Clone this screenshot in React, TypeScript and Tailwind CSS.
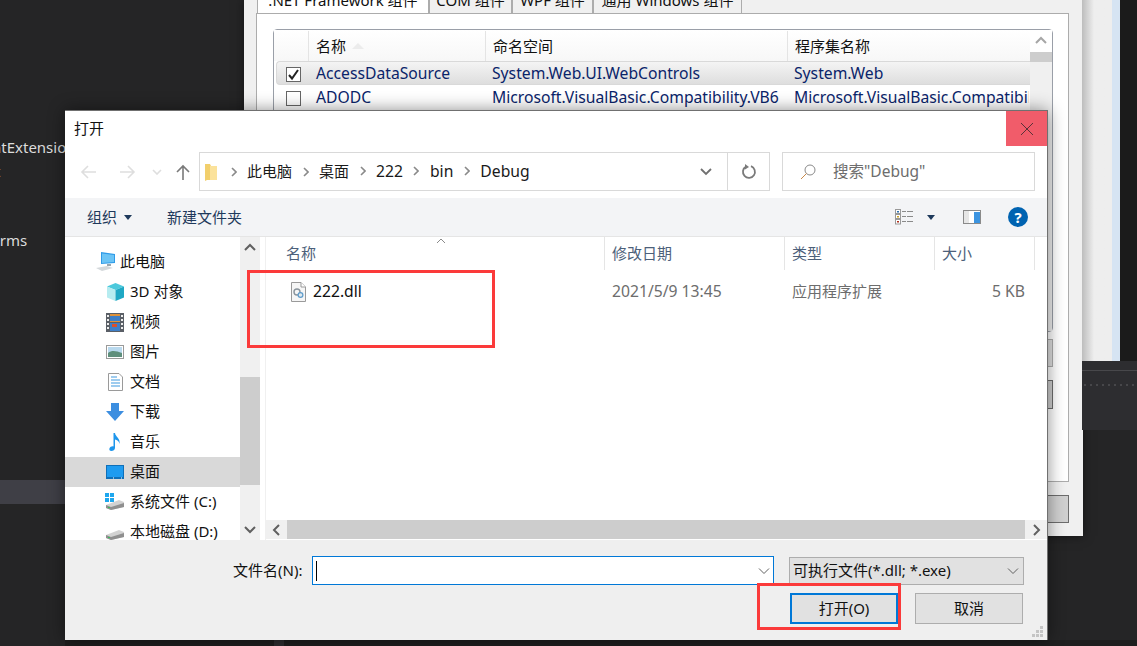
import type { ReactNode } from "react";

const cjk = "[font-family:'Noto_Sans','Noto_Sans_CJK_SC',sans-serif]";

function Chevron({ dir, className = "" }: { dir: "up" | "down" | "left" | "right"; className?: string }) {
  const paths = {
    up: "M1 8 L6 3 L11 8",
    down: "M1 4 L6 9 L11 4",
    left: "M8 1 L3 6 L8 11",
    right: "M4 1 L9 6 L4 11",
  };
  return (
    <svg width="12" height="12" viewBox="0 0 12 12" className={className}>
      <path d={paths[dir]} fill="none" stroke="currentColor" strokeWidth="2" />
    </svg>
  );
}

function ThinChevron() {
  return (
    <svg width="12" height="8" viewBox="0 0 12 8">
      <path d="M1 1.5 L6 6.5 L11 1.5" fill="none" stroke="#606060" strokeWidth="1" />
    </svg>
  );
}

function MonitorIcon() {
  return (
    <svg width="22" height="22" viewBox="0 0 22 22">
      <path d="M6 1 L20 3 L20 12 L6 13 Z" fill="#2f9be8" />
      <path d="M7 2.5 L19 4 L19 11 L7 12 Z" fill="#6cc4f5" />
      <path d="M12 13 L16 13 L16 15 L12 15 Z" fill="#9aa7b0" />
      <path d="M1 17 L12 15 L18 17 L7 20 Z" fill="#d4d8db" />
    </svg>
  );
}

function CubeIcon() {
  return (
    <svg width="19" height="20" viewBox="0 0 19 20">
      <path d="M9.5 1 L18 4.5 L9.5 8 L1 4.5 Z" fill="#4cc9dc" />
      <path d="M1 4.5 L9.5 8 L9.5 19 L1 15.5 Z" fill="#b6ecf0" />
      <path d="M18 4.5 L9.5 8 L9.5 19 L18 15.5 Z" fill="#1fa8c4" />
    </svg>
  );
}

function FilmIcon() {
  return (
    <svg width="18" height="19" viewBox="0 0 18 19">
      <rect x="0" y="0" width="18" height="19" fill="#5a5f66" />
      <rect x="4" y="1" width="10" height="8" fill="#e0923a" />
      <rect x="4" y="3" width="10" height="5" fill="#3e7fc7" />
      <rect x="4" y="10" width="10" height="8" fill="#3e7fc7" />
      <rect x="6" y="11" width="5" height="3" fill="#d9502e" />
      <rect x="1" y="2" width="2" height="2" fill="#eee" />
      <rect x="1" y="6" width="2" height="2" fill="#eee" />
      <rect x="1" y="10" width="2" height="2" fill="#eee" />
      <rect x="1" y="14" width="2" height="2" fill="#eee" />
      <rect x="15" y="2" width="2" height="2" fill="#eee" />
      <rect x="15" y="6" width="2" height="2" fill="#eee" />
      <rect x="15" y="10" width="2" height="2" fill="#eee" />
      <rect x="15" y="14" width="2" height="2" fill="#eee" />
    </svg>
  );
}

function PictureIcon() {
  return (
    <svg width="18" height="14" viewBox="0 0 18 14">
      <rect x="0.5" y="0.5" width="17" height="13" fill="#fff" stroke="#9a9a9a" />
      <rect x="2" y="2" width="14" height="10" fill="#b9d9ee" />
      <path d="M2 8 C6 5 10 6 16 8 L16 12 L2 12 Z" fill="#5f8f7c" />
    </svg>
  );
}

function DocIcon() {
  return (
    <svg width="15" height="18" viewBox="0 0 15 18">
      <path d="M0.5 0.5 L11 0.5 L14.5 4 L14.5 17.5 L0.5 17.5 Z" fill="#fff" stroke="#9a9a9a" />
      <path d="M3 4 H9 M3 7 H12 M3 10 H12 M3 13 H12" stroke="#3f9ae0" strokeWidth="1.2" />
    </svg>
  );
}

function DownloadIcon() {
  return (
    <svg width="18" height="18" viewBox="0 0 18 18">
      <path d="M5 0 H13 V8 H18 L9 18 L0 8 H5 Z" fill="#3c8ee0" />
    </svg>
  );
}

function MusicIcon() {
  return (
    <svg width="12" height="18" viewBox="0 0 12 18">
      <path d="M4.5 0 H6 C6.5 4 11.5 5 10.5 11 C10 8 8 7 6 6.5 V15 C6 17 4 18 2.5 18 C0.5 18 0 16.5 0.5 15.2 C1 14 3 13 4.5 13.5 Z" fill="#1e96ec" />
    </svg>
  );
}

function DesktopIcon() {
  return (
    <svg width="18" height="14" viewBox="0 0 18 14">
      <rect x="0" y="0" width="18" height="14" fill="#0f6fb8" />
      <rect x="1" y="1" width="16" height="11" fill="#1e9bf0" />
      <rect x="7" y="12.5" width="1" height="1" fill="#fff" />
      <rect x="15" y="12.5" width="1" height="1" fill="#fff" />
    </svg>
  );
}

function DriveIcon({ windows = false }: { windows?: boolean }) {
  return (
    <svg width="20" height="18" viewBox="0 0 20 18">
      {windows && (
        <g fill="#1ea7ee">
          <rect x="0" y="0" width="4" height="4" />
          <rect x="5" y="0" width="4" height="4" />
          <rect x="0" y="5" width="4" height="4" />
          <rect x="5" y="5" width="4" height="4" />
        </g>
      )}
      <path d="M1 12 L14 7 L19 9 L19 14 L6 17 L1 15 Z" fill="#d2d2d2" />
      <path d="M1 12 L6 14 L19 10 L19 14 L6 17 L1 15 Z" fill="#8f8f8f" />
      <rect x="3" y="14" width="2" height="1" fill="#37c25a" />
    </svg>
  );
}

function DllIcon() {
  return (
    <svg width="15" height="20" viewBox="0 0 15 20">
      <path d="M0.5 0.5 L10 0.5 L14.5 5 L14.5 19.5 L0.5 19.5 Z" fill="#f6f6f6" stroke="#9a9a9a" />
      <path d="M10 0.5 V5 H14.5" fill="#fff" stroke="#9a9a9a" />
      <circle cx="6" cy="10" r="3" fill="none" stroke="#8a949c" strokeWidth="1.4" />
      <circle cx="9.5" cy="13" r="2.4" fill="#dfe8ee" stroke="#5e9ccb" strokeWidth="1.2" />
    </svg>
  );
}

function FolderIcon() {
  return (
    <svg width="12" height="18" viewBox="0 0 12 18">
      <path d="M0 1 H5 L6 3 H12 V17 H2 L0 18 Z" fill="#f2cf6c" />
      <path d="M5 3 H12 V17 H5 Z" fill="#fbe29b" />
    </svg>
  );
}

function NavArrow({ dir, color }: { dir: "left" | "right" | "up"; color: string }) {
  const d = {
    left: "M16 8 H2 M8 2 L2 8 L8 14",
    right: "M0 8 H14 M8 2 L14 8 L8 14",
    up: "M8 16 V2 M2 8 L8 2 L14 8",
  };
  return (
    <svg width="16" height="16" viewBox="0 0 16 16">
      <path d={d[dir]} fill="none" stroke={color} strokeWidth="1.6" />
    </svg>
  );
}

function EditorEdge() {
  return (
    <div className="absolute left-0 top-0 flex w-[65px] flex-col overflow-hidden pt-[135px] text-[15px] text-[#dcdcdc]">
      <div className="-ml-[8px] h-6 whitespace-nowrap leading-6">ntExtension</div>
      <div className="-ml-[5px] h-6 whitespace-nowrap leading-6">t</div>
      <div className="mt-[45px] -ml-[17px] h-6 whitespace-nowrap leading-6">Forms</div>
      <div className="mt-[228px] h-6 bg-[#3f3f46]" />
    </div>
  );
}

function BackDialog() {
  const tabClass = "flex h-[27px] items-center justify-center border border-b-0 border-[#acacac] bg-[#f0f0f0] pb-[2px] text-[15px] text-[#111]";
  return (
    <div className="absolute left-[244px] top-0 flex h-[536px] w-[839px] flex-col items-end bg-[#f0f0f0] pr-[14px] shadow-[0_0_10px_rgba(0,0,0,0.5)]">
      <div className="-mt-[13px] flex h-[27px] w-[812px] shrink-0">
        <div className={`${tabClass} w-[172px] !bg-white`}>.NET Framework 组件</div>
        <div className={`${tabClass} w-[83px]`}>COM 组件</div>
        <div className={`${tabClass} w-[81px]`}>WPF 组件</div>
        <div className={`${tabClass} w-[149px]`}>通用 Windows 组件</div>
      </div>
      <div className="-mt-px flex h-[469px] w-[813px] shrink-0 flex-col items-end border border-[#acacac] bg-white pr-[15px] pt-[15px]">
        <div className="flex h-[303px] w-[780px] shrink-0 rounded-sm border border-[#9a9fa8] bg-white">
          <div className="flex w-[756px] flex-col text-[15.7px]">
            <div className="flex h-[31px] bg-gradient-to-b from-white to-[#f7f7f7] pt-px text-[15px] text-[#111]">
              <div className="w-[35px] border-r border-[#e4e4e4]" />
              <div className="relative flex w-[177px] items-center border-r border-[#e4e4e4] pl-[7px]">
                名称
                <svg width="12" height="6" viewBox="0 0 12 6" className="ml-[6px]">
                  <path d="M0 6 L6 0 L12 6 Z" fill="#ececec" />
                </svg>
              </div>
              <div className="flex w-[302px] items-center border-r border-[#e4e4e4] pl-[7px]">命名空间</div>
              <div className="flex flex-1 items-center pl-[7px]">程序集名称</div>
            </div>
            <div className="ml-[2px] flex h-[24px] items-center rounded-l-sm border border-r-0 border-[#d9d9d9] bg-gradient-to-b from-[#f4f4f4] to-[#dedede] pt-[2px] text-[#0a246a]">
              <div className="flex w-[33px] justify-center">
                <div className="flex h-[15px] w-[15px] items-center justify-center border border-[#666] bg-white">
                  <svg width="13" height="13" viewBox="0 0 13 13">
                    <path d="M2 7 L5 10.5 L11 2" fill="none" stroke="#222" strokeWidth="2" />
                  </svg>
                </div>
              </div>
              <div className="w-[176px] pl-[6px]">AccessDataSource</div>
              <div className="w-[302px] pl-[6px]">System.Web.UI.WebControls</div>
              <div className="flex-1 pl-[6px]">System.Web</div>
            </div>
            <div className="ml-[2px] flex h-[24px] items-center px-px pt-[2px] text-[#0a246a]">
              <div className="flex w-[33px] justify-center">
                <div className="h-[15px] w-[15px] border border-[#666] bg-white" />
              </div>
              <div className="w-[176px] pl-[6px]">ADODC</div>
              <div className="w-[302px] whitespace-nowrap pl-[6px]">Microsoft.VisualBasic.Compatibility.VB6</div>
              <div className="w-[241px] overflow-hidden whitespace-nowrap pl-[6px]">Microsoft.VisualBasic.Compatibility</div>
            </div>
          </div>
          <div className="flex flex-1 flex-col bg-[#f0f0f0]">
            <div className="flex h-[22px] items-center justify-center bg-white text-[#a6a6a6]">
              <Chevron dir="up" />
            </div>
            <div className="h-[10px] bg-[#cdcdcd]" />
          </div>
        </div>
        <div className="mt-[7px] h-[28px] w-[80px] shrink-0 border border-[#adadad] bg-[#e1e1e1]" />
        <div className="mt-[13px] h-[29px] w-[80px] shrink-0 border border-[#6d6d6d] bg-[#d0d0d0]" />
      </div>
      <div className="mt-[13px] h-[28px] w-[120px] shrink-0 border border-[#6d6d6d] bg-[#d0d0d0]" />
    </div>
  );
}

function RightEdge() {
  return (
    <div className="absolute left-[1082px] top-0 flex h-[430px] w-[55px] flex-col">
      <div className="flex h-[361px] shrink-0">
        <div className="w-[30px] bg-gradient-to-r from-[#bdbdbd] via-[#eeeeee] via-40% to-[#eeeeee]" />
        <div className="w-[8px] bg-[#d6e4f3]" />
        <div className="flex-1 bg-[#1b1b1b]" />
      </div>
      <div className="flex flex-1 flex-col bg-[#2d2d30]">
        <div className="mt-[9px] h-px bg-[#48484b]" />
        <div className="mt-[11px] h-[6px] bg-[radial-gradient(#47474a_1px,transparent_1.5px)] bg-[length:6px_6px]" />
      </div>
    </div>
  );
}

function AddressBar() {
  const crumbs = [
    { label: "此电脑", size: "text-[15px]" },
    { label: "桌面", size: "text-[15px]" },
    { label: "222", size: "text-[15.7px]" },
    { label: "bin", size: "text-[15.7px]" },
    { label: "Debug", size: "text-[15.7px]" },
  ];
  return (
    <div className="flex h-[52px] shrink-0 items-start pt-[6px]">
      <div className="flex h-[39px] w-[134px] items-center">
        <div className="ml-[15px]"><NavArrow dir="left" color="#dedede" /></div>
        <div className="ml-[24px]"><NavArrow dir="right" color="#dedede" /></div>
        <div className="ml-[15px] flex w-[12px] justify-center text-[#dedede]">
          <svg width="10" height="6" viewBox="0 0 10 6"><path d="M1 1 L5 5 L9 1" fill="none" stroke="currentColor" strokeWidth="1.6" /></svg>
        </div>
        <div className="ml-[12px]"><NavArrow dir="up" color="#7a7a7a" /></div>
      </div>
      <div className="flex h-[39px] w-[571px] items-center border border-[#d9d9d9] text-[#1a1a1a]">
        <div className="ml-[5px] mr-[3px] flex items-center"><FolderIcon /></div>
        {crumbs.map((crumb) => (
          <div key={crumb.label} className="flex items-center">
            <div className="flex w-[27px] justify-center text-[#8a8a8a]">
              <svg width="6" height="10" viewBox="0 0 6 10"><path d="M1 1 L5 5 L1 9" fill="none" stroke="currentColor" strokeWidth="1.6" /></svg>
            </div>
            <span className={crumb.size}>{crumb.label}</span>
          </div>
        ))}
        <div className="ml-auto flex w-[42px] justify-center text-[#707070]">
          <svg width="12" height="8" viewBox="0 0 12 8"><path d="M1 1 L6 6 L11 1" fill="none" stroke="currentColor" strokeWidth="1.8" /></svg>
        </div>
        <div className="flex h-full w-[42px] items-center justify-center border-l border-[#d9d9d9]">
          <svg width="16" height="16" viewBox="0 0 16 16">
            <path d="M10 2.2 A6 6 0 1 1 5 2.6" fill="none" stroke="#7a7a7a" strokeWidth="1.8" />
            <path d="M4 0 L8 3 L4 5.5 Z" fill="#7a7a7a" />
          </svg>
        </div>
      </div>
      <div className="ml-[12px] flex h-[39px] w-[253px] items-center border border-[#d9d9d9] text-[15.5px] text-[#6d6d6d]">
        <svg width="18" height="18" viewBox="0 0 18 18" className="ml-[16px]">
          <circle cx="11" cy="7" r="5" fill="none" stroke="#8a8a8a" strokeWidth="1" />
          <path d="M7.5 10.5 L2 16" stroke="#c98a4a" strokeWidth="1" />
        </svg>
        <span className="ml-[16px]">搜索"Debug"</span>
      </div>
    </div>
  );
}

function Toolbar() {
  return (
    <div className="flex h-[39px] shrink-0 items-center border-b border-[#e5e5e5] bg-[#f3f4f6] text-[15px] text-[#1e395b]">
      <span className="ml-[22px]">组织</span>
      <svg width="8" height="5" viewBox="0 0 8 5" className="ml-[7px]"><path d="M0 0 H8 L4 5 Z" fill="#1e395b" /></svg>
      <span className="ml-[35px]">新建文件夹</span>
      <svg width="18" height="16" viewBox="0 0 18 16" className="ml-[653px]">
        <rect x="0.5" y="0.5" width="5" height="4" fill="#fff" stroke="#999" />
        <rect x="0.5" y="5.5" width="5" height="4" fill="#fff" stroke="#999" />
        <rect x="0.5" y="10.5" width="5" height="4.5" fill="#fff" stroke="#999" />
        <rect x="2" y="2" width="2" height="1.5" fill="#2a6fb0" />
        <rect x="2" y="7" width="2" height="1.5" fill="#c9a227" />
        <rect x="2" y="12" width="2" height="1.5" fill="#b0301f" />
        <path d="M7 2.5 H11 M12 2.5 H18 M7 7.5 H11 M12 7.5 H18 M7 12.5 H11 M12 12.5 H18" stroke="#8a8a8a" />
      </svg>
      <svg width="8" height="5" viewBox="0 0 8 5" className="ml-[14px]"><path d="M0 0 H8 L4 5 Z" fill="#1e395b" /></svg>
      <svg width="18" height="14" viewBox="0 0 18 14" className="ml-[28px]">
        <rect x="0.5" y="0.5" width="17" height="13" fill="#fff" stroke="#8a8a8a" />
        <rect x="1" y="1" width="5" height="12" fill="#e6e6e6" />
        <rect x="11" y="2" width="6" height="11" fill="#3c94e0" />
      </svg>
      <div className="ml-[27px] flex h-[20px] w-[20px] items-center justify-center rounded-full bg-[#0063b1] text-[15px] font-bold leading-none text-white">?</div>
    </div>
  );
}

function SidebarRow({ icon, label, top, selected }: { icon: ReactNode; label: string; top?: boolean; selected?: boolean }) {
  return (
    <div className={`flex h-[30px] shrink-0 items-center whitespace-nowrap text-[15px] text-[#111] ${selected ? "bg-[#d9d9d9]" : ""}`}>
      <div className={`flex justify-center ${top ? "ml-[29px] w-[24px]" : "ml-[40px] w-[20px]"}`}>{icon}</div>
      <span className={`-mt-px ${top ? "ml-[2px]" : "ml-[5px]"}`}>{label}</span>
    </div>
  );
}

function Sidebar() {
  return (
    <div className="flex w-[195px] shrink-0">
      <div className="flex h-full w-[175px] flex-col overflow-hidden pt-[10px]">
        <SidebarRow top icon={<MonitorIcon />} label="此电脑" />
        <SidebarRow icon={<CubeIcon />} label="3D 对象" />
        <SidebarRow icon={<FilmIcon />} label="视频" />
        <SidebarRow icon={<PictureIcon />} label="图片" />
        <SidebarRow icon={<DocIcon />} label="文档" />
        <SidebarRow icon={<DownloadIcon />} label="下载" />
        <SidebarRow icon={<MusicIcon />} label="音乐" />
        <SidebarRow selected icon={<DesktopIcon />} label="桌面" />
        <SidebarRow icon={<DriveIcon windows />} label="系统文件 (C:)" />
        <SidebarRow icon={<DriveIcon />} label="本地磁盘 (D:)" />
      </div>
      <div className="flex w-[20px] flex-col bg-[#f0f0f0] text-[#606060]">
        <div className="flex h-[21px] items-center justify-center"><Chevron dir="up" /></div>
        <div className="mt-[119px] h-[108px] bg-[#cdcdcd]" />
        <div className="mt-[33px] flex h-[21px] items-center justify-center"><Chevron dir="down" /></div>
      </div>
    </div>
  );
}

function FilePane() {
  const cols = "grid grid-cols-[339px_180px_150px_100px_12px]";
  return (
    <div className="ml-[5px] flex min-w-0 flex-1 flex-col border-l border-[#f0f0f0]">
      <div className="relative flex-1">
        <div className={`${cols} h-[33px] text-[15px] text-[#4c607a]`}>
          <div className="relative flex items-center border-r border-[#e5e5e5] pl-[20px]">
            名称
            <svg width="10" height="6" viewBox="0 0 10 6" className="absolute left-[170px] top-[1px]">
              <path d="M1 5 L5 1 L9 5" fill="none" stroke="#8a8a8a" />
            </svg>
          </div>
          <div className="flex items-center border-r border-[#e5e5e5] pl-[7px]">修改日期</div>
          <div className="flex items-center border-r border-[#e5e5e5] pl-[7px]">类型</div>
          <div className="flex items-center border-r border-[#e5e5e5] pl-[7px]">大小</div>
          <div />
        </div>
        <div className={`${cols} mt-[10px] h-[22px] items-center text-[15px] text-[#6d6d6d]`}>
          <div className="flex items-center pl-[25px] text-[15.7px] text-[#111]">
            <DllIcon />
            <span className="ml-[7px]">222.dll</span>
          </div>
          <div className="pl-[7px] text-[15.7px]">2021/5/9 13:45</div>
          <div className="-mt-[2px] pl-[7px]">应用程序扩展</div>
          <div className="pr-[10px] text-right text-[15.7px]">5 KB</div>
          <div />
        </div>
      </div>
      <div className="mb-px flex h-[19px] shrink-0 bg-[#f0f0f0] text-[#606060]">
        <div className="flex w-[21px] items-center justify-center"><Chevron dir="left" /></div>
        <div className="flex-1 bg-[#cdcdcd]" />
        <div className="flex w-[22px] items-center justify-center"><Chevron dir="right" /></div>
      </div>
    </div>
  );
}

function BottomBar() {
  return (
    <div className="relative flex flex-1 flex-col bg-[#efefef] pt-[16px] text-[15px] text-[#111]">
      <div className="flex h-[29px] items-center pl-[168px]">
        <span className="-mt-px w-[79px] whitespace-nowrap">文件名(N):</span>
        <div className="flex h-[29px] w-[462px] items-center border border-[#0078d7] bg-white">
          <div className="ml-[3px] h-[20px] w-px bg-black" />
          <div className="ml-auto mr-[3px]"><ThinChevron /></div>
        </div>
        <div className="ml-[15px] flex h-[28px] w-[235px] items-center border border-[#adadad] bg-[#e1e1e1] pl-[3px] pr-[4px]">
          <span className="-mt-px">可执行文件(*.dll; *.exe)</span>
          <div className="ml-auto"><ThinChevron /></div>
        </div>
      </div>
      <div className="mt-[8px] flex pl-[725px]">
        <div className="flex h-[31px] w-[108px] items-center justify-center border-2 border-[#0078d7] bg-[#e1e1e1]">打开(O)</div>
        <div className="ml-[17px] flex h-[31px] w-[108px] items-center justify-center border border-[#adadad] bg-[#e1e1e1]">取消</div>
      </div>
      <svg width="12" height="12" viewBox="0 0 12 12" className="absolute bottom-[2px] right-[3px]">
        <g fill="#c4c4c4">
          <rect x="8" y="0" width="3" height="3" />
          <rect x="4" y="4" width="3" height="3" />
          <rect x="8" y="4" width="3" height="3" />
          <rect x="0" y="8" width="3" height="3" />
          <rect x="4" y="8" width="3" height="3" />
          <rect x="8" y="8" width="3" height="3" />
        </g>
      </svg>
    </div>
  );
}

function OpenDialog() {
  return (
    <div className="absolute left-[65px] top-[110px] flex h-[530px] w-[983px] flex-col border-r border-t border-[#707070] bg-white shadow-[0_0_16px_rgba(0,0,0,0.45)]">
      <div className="flex h-[35px] shrink-0 items-center">
        <span className="-mt-px ml-[9px] text-[15px] text-[#111]">打开</span>
        <div className="ml-auto flex h-full w-[41px] items-center justify-center bg-[#f15c6a]">
          <svg width="12" height="12" viewBox="0 0 12 12">
            <path d="M0 0 L12 12 M12 0 L0 12" stroke="#5a3238" strokeWidth="1" />
          </svg>
        </div>
      </div>
      <AddressBar />
      <Toolbar />
      <div className="flex h-[303px] shrink-0">
        <Sidebar />
        <FilePane />
      </div>
      <BottomBar />
    </div>
  );
}

export default function App() {
  return (
    <div className={`relative h-[646px] w-[1137px] overflow-hidden bg-[#252526] ${cjk}`}>
      <EditorEdge />
      <BackDialog />
      <RightEdge />
      <div className="absolute bottom-0 left-[65px] right-0 flex h-[6px] bg-[#1e1e1e]">
        <div className="ml-[209px] w-[10px] bg-[#2d2d30]" />
      </div>
      <OpenDialog />
      <div className="absolute left-[247px] top-[270px] h-[78px] w-[248px] border-[3px] border-[#fb3a3a]" />
      <div className="absolute left-[757px] top-[583px] h-[47px] w-[144px] border-[3px] border-[#fb3a3a]" />
    </div>
  );
}
